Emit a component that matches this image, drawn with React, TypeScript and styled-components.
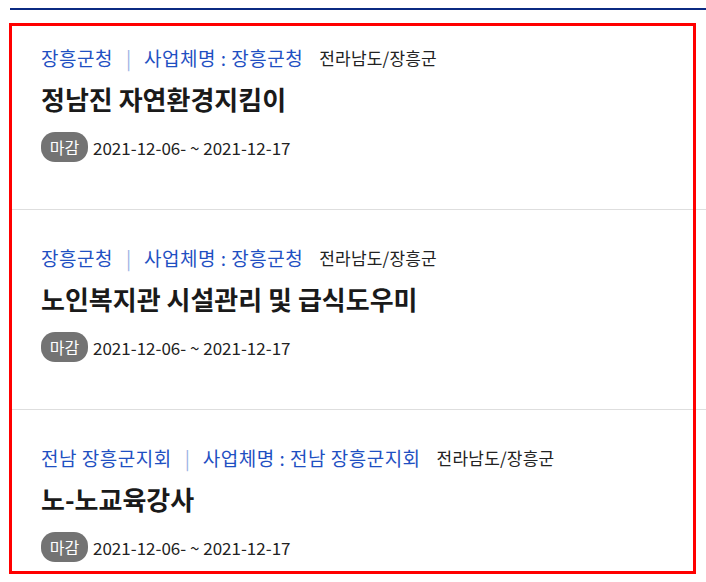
import styled, { createGlobalStyle } from "styled-components";

const GlobalStyle = createGlobalStyle`
  body {
    margin: 0;
    background: #fff;
    font-family: "Noto Sans CJK KR", "Noto Sans", sans-serif;
    color: #222;
  }
`;

const Page = styled.div`
  padding-left: 10px;
  padding-top: 8px;
  overflow: hidden;
`;

const TopRule = styled.div`
  height: 2px;
  background: #0b2a82;
`;

const List = styled.ul`
  position: relative;
  list-style: none;
  margin: 0;
  padding: 0;
  /* red selection frame drawn over the list */
  &::after {
    content: "";
    position: absolute;
    top: 13px;
    left: -1px;
    width: 681px;
    height: 545px;
    border: 3px solid #ff0000;
    pointer-events: none;
  }
`;

const Item = styled.li`
  height: 200px;
  box-sizing: border-box;
  padding: 34px 0 0 31px;
  border-bottom: 1px solid #dedede;
`;

const Meta = styled.div`
  display: flex;
  align-items: center;
  height: 26px;
  white-space: nowrap;
`;

const Org = styled.span`
  font-size: 19px;
  letter-spacing: 0.5px;
  color: #1f50c2;
`;

const Divider = styled.span`
  font-size: 19px;
  color: #9cb2e4;
  margin: 0 13px;
`;

const Region = styled.span`
  font-size: 17px;
  letter-spacing: 0.2px;
  color: #222;
  margin-left: 16px;
`;

const Title = styled.h3`
  margin: 12px 0 0;
  font-size: 26px;
  line-height: 34px;
  font-weight: 700;
  color: #1a1a1a;
`;

const Period = styled.div`
  display: flex;
  align-items: center;
  gap: 5px;
  margin-top: 16px;
`;

const Badge = styled.span`
  display: inline-flex;
  align-items: center;
  justify-content: center;
  width: 47px;
  height: 30px;
  border-radius: 14px;
  background: #737373;
  color: #fff;
  font-size: 16px;
`;

const Dates = styled.span`
  font-size: 17px;
  color: #222;
`;

const jobs = [
  {
    org: "장흥군청",
    company: "장흥군청",
    region: "전라남도/장흥군",
    title: "정남진 자연환경지킴이",
  },
  {
    org: "장흥군청",
    company: "장흥군청",
    region: "전라남도/장흥군",
    title: "노인복지관 시설관리 및 급식도우미",
  },
  {
    org: "전남 장흥군지회",
    company: "전남 장흥군지회",
    region: "전라남도/장흥군",
    title: "노-노교육강사",
  },
];

const App = () => {
  return (
    <>
      <GlobalStyle />
      <Page>
        <TopRule />
        <List>
          {jobs.map((job, i) => (
            <Item key={i}>
              <Meta>
                <Org>{job.org}</Org>
                <Divider>|</Divider>
                <Org>사업체명 : {job.company}</Org>
                <Region>{job.region}</Region>
              </Meta>
              <Title>{job.title}</Title>
              <Period>
                <Badge>마감</Badge>
                <Dates>2021-12-06- ~ 2021-12-17</Dates>
              </Period>
            </Item>
          ))}
        </List>
      </Page>
    </>
  );
};

export default App;
